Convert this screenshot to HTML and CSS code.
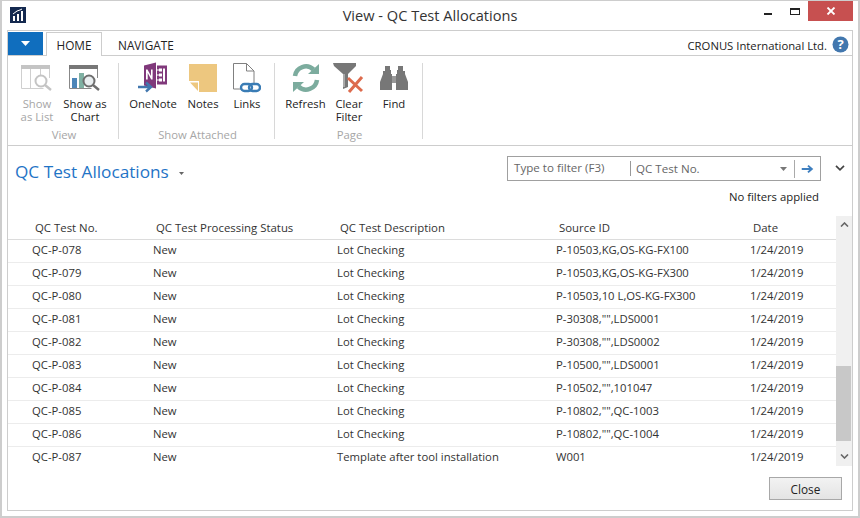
FILE: index.html
```html
<!DOCTYPE html>
<html lang="en">
<head>
<meta charset="utf-8">
<title>View - QC Test Allocations</title>
<link rel="stylesheet" href="styles.css">
</head>
<body>
<div class="window">
  <header class="titlebar">
    <div class="title-left">
      <svg class="app-icon" width="16" height="16" viewBox="0 0 16 16"><rect width="16" height="16" fill="#14294f"/><path d="M3 9h2v5H3zM7 7h2v7H7zM11 4h2v10h-2z" fill="#fff"/><path d="M3 7l4-3 3-1 2-1" stroke="#fff" fill="none"/></svg>
    </div>
    <div class="title-text">View - QC Test Allocations</div>
    <div class="win-buttons">
      <span class="win-min"></span>
      <span class="win-max"></span>
      <span class="win-close"><svg width="10" height="8" viewBox="0 0 10 8"><path d="M1.5 0.5l7 7M8.5 0.5l-7 7" stroke="#fff" stroke-width="1.8"/></svg></span>
    </div>
  </header>
  <div class="frame">
    <div class="tabs">
      <button class="menu-btn"><svg width="9" height="5" viewBox="0 0 9 5"><path d="M0 0h9L4.500 5z" fill="#fff"/></svg></button>
      <div class="tab active">HOME</div>
      <div class="tab">NAVIGATE</div>
      <div class="company">CRONUS International Ltd.</div>
      <svg class="help" width="17" height="17" viewBox="0 0 17 17"><circle cx="8.500" cy="8.500" r="8" fill="#4277ae"/><text x="8.500" y="13" text-anchor="middle" class="help-q">?</text></svg>
    </div>
    <div class="ribbon">
      <section class="group group-view">
        <div class="group-items">
          <div class="rbtn disabled w48">
            <svg width="32" height="26" viewBox="0 0 32 26"><path d="M0 0h29v4H0z" fill="#c4c4c4"/><path d="M.5 4v19.500h22M28.500 4v9M9.500 4v19M19.500 4v6" stroke="#cfcfcf" fill="none"/><circle cx="20" cy="16" r="5.500" fill="#fff" stroke="#c4c4c4" stroke-width="2"/><path d="M24 20l6 5" stroke="#c4c4c4" stroke-width="2.400"/></svg>
            <span>Show<br>as List</span>
          </div>
          <div class="rbtn w48">
            <svg width="32" height="26" viewBox="0 0 32 26"><path d="M0 0h29v4H0z" fill="#777"/><path d="M.5 4v19.500h22M28.500 4v9" stroke="#888" fill="none"/><path d="M3 13h5v10H3z" fill="#4d86b8"/><path d="M10 8h5v15h-5z" fill="#7fb0a2"/><circle cx="20" cy="16" r="5.500" fill="#e9eef0" stroke="#6e6e6e" stroke-width="2"/><path d="M24 20l6 5" stroke="#6e6e6e" stroke-width="2.400"/></svg>
            <span>Show as<br>Chart</span>
          </div>
        </div>
        <div class="group-label">View</div>
      </section>
      <section class="group group-attached">
        <div class="group-items">
          <div class="rbtn w50">
            <svg width="32" height="31" viewBox="0 0 32 31"><path d="M7 3l12-3v26l-12-3z" fill="#80397b"/><path d="M20 3h10v19H20z" fill="#80397b"/><path d="M22 6h3v3h-3zM22 11h3v3h-3zM22 16h3v3h-3zM26 6h2v13h-2z" fill="#fff"/><path d="M19 7.500h3M19 12.500h3M19 17.500h3" stroke="#fff"/><path d="M9 17V7h1.500l3.500 6.500V7h1.600v10h-1.400l-3.500-6.500V17z" fill="#fff"/><path d="M1 24.500h12M9 20l5 4.500-5 4.500" stroke="#4277ae" stroke-width="2.400" fill="none"/></svg>
            <span>OneNote</span>
          </div>
          <div class="rbtn w40">
            <svg width="28" height="28" viewBox="0 0 28 28"><path d="M0 0h28v28H10V17H0z" fill="#edc77f"/><path d="M1 18.500h8V27z" fill="#edc77f"/></svg>
            <span>Notes</span>
          </div>
          <div class="rbtn w48">
            <svg width="28" height="30" viewBox="0 0 28 30"><path d="M.5.500h13l7.500 7.500v13M8 26H.5V.5" fill="#fff" stroke="#808080"/><path d="M13.500.500V8H21" fill="none" stroke="#808080"/><rect x="8" y="21" width="11" height="7" rx="3.500" fill="none" stroke="#3a7cb5" stroke-width="2.400"/><rect x="16" y="21" width="11" height="7" rx="3.500" fill="none" stroke="#3a7cb5" stroke-width="2.400"/></svg>
            <span>Links</span>
          </div>
        </div>
        <div class="group-label">Show Attached</div>
      </section>
      <section class="group group-page">
        <div class="group-items">
          <div class="rbtn w43">
            <svg width="28" height="28" viewBox="0 0 28 28"><path d="M3 12A11 11 0 0 1 21.500 5.500" fill="none" stroke="#7cac9e" stroke-width="4.500"/><path d="M16 10h11V0z" fill="#7cac9e"/><path d="M25 16A11 11 0 0 1 6.500 22.500" fill="none" stroke="#7cac9e" stroke-width="4.500"/><path d="M12 18H1v10z" fill="#7cac9e"/></svg>
            <span>Refresh</span>
          </div>
          <div class="rbtn w44">
            <svg width="32" height="30" viewBox="0 0 32 30"><path d="M0 0h23v3l-8 8v13l-5 2V11L1 3z" fill="#777"/><path d="M11 11v13" stroke="#ddd"/><path d="M15 15l14 13M29 14L16 29" stroke="#dd6b4d" stroke-width="3"/></svg>
            <span>Clear<br>Filter</span>
          </div>
          <div class="rbtn w46">
            <svg width="28" height="26" viewBox="0 0 28 26"><path d="M5 1h5v4h1v5H3V6h2zM18 1h5v5h2v4h-8V5h1z" fill="#777"/><path d="M3 9h9v16H0v-8zM25 9h-9v16h12v-8z" fill="#777"/><path d="M12 11h4v7h-4z" fill="#999"/></svg>
            <span>Find</span>
          </div>
        </div>
        <div class="group-label">Page</div>
      </section>
    </div>
    <main class="content">
      <div class="page-head">
        <div class="page-title">QC Test Allocations <svg class="caret" width="5" height="3" viewBox="0 0 5 3"><path d="M0 0h5L2.500 3z" fill="#666"/></svg></div>
        <div class="filter-box">
          <span class="filter-type">Type to filter (F3)</span>
          <span class="filter-field">QC Test No.</span>
          <svg class="filter-drop" width="7" height="4" viewBox="0 0 7 4"><path d="M0 0h7L3.500 4z" fill="#777"/></svg>
          <svg class="filter-go" width="26" height="18" viewBox="0 0 26 18"><path d="M7 9h10M13.500 5.500L17.500 9l-4 3.500" fill="none" stroke="#3f7fbf" stroke-width="2"/></svg>
        </div>
        <svg class="collapse" width="10" height="6" viewBox="0 0 10 6"><path d="M1 .800l4 4 4-4" fill="none" stroke="#444" stroke-width="1.700"/></svg>
      </div>
      <div class="no-filter">No filters applied</div>
      <div class="list">
        <table class="grid">
          <thead>
            <tr><th class="c1">QC Test No.</th><th class="c2">QC Test Processing Status</th><th class="c3">QC Test Description</th><th class="c4">Source ID</th><th class="c5">Date</th></tr>
          </thead>
          <tbody>
            <tr><td class="c1">QC-P-078</td><td>New</td><td>Lot Checking</td><td>P-10503,KG,OS-KG-FX100</td><td>1/24/2019</td></tr>
            <tr><td class="c1">QC-P-079</td><td>New</td><td>Lot Checking</td><td>P-10503,KG,OS-KG-FX300</td><td>1/24/2019</td></tr>
            <tr><td class="c1">QC-P-080</td><td>New</td><td>Lot Checking</td><td>P-10503,10 L,OS-KG-FX300</td><td>1/24/2019</td></tr>
            <tr><td class="c1">QC-P-081</td><td>New</td><td>Lot Checking</td><td>P-30308,"",LDS0001</td><td>1/24/2019</td></tr>
            <tr><td class="c1">QC-P-082</td><td>New</td><td>Lot Checking</td><td>P-30308,"",LDS0002</td><td>1/24/2019</td></tr>
            <tr><td class="c1">QC-P-083</td><td>New</td><td>Lot Checking</td><td>P-10500,"",LDS0001</td><td>1/24/2019</td></tr>
            <tr><td class="c1">QC-P-084</td><td>New</td><td>Lot Checking</td><td>P-10502,"",101047</td><td>1/24/2019</td></tr>
            <tr><td class="c1">QC-P-085</td><td>New</td><td>Lot Checking</td><td>P-10802,"",QC-1003</td><td>1/24/2019</td></tr>
            <tr><td class="c1">QC-P-086</td><td>New</td><td>Lot Checking</td><td>P-10802,"",QC-1004</td><td>1/24/2019</td></tr>
            <tr class="last"><td class="c1">QC-P-087</td><td>New</td><td>Template after tool installation</td><td>W001</td><td>1/24/2019</td></tr>
          </tbody>
        </table>
        <div class="scrollbar">
          <svg width="9" height="5" viewBox="0 0 9 5"><path d="M1 4.500l3.500-3.500 3.500 3.500" fill="none" stroke="#666" stroke-width="1.600"/></svg>
          <div class="track"><div class="thumb"></div></div>
          <svg width="9" height="5" viewBox="0 0 9 5"><path d="M1 .5l3.500 3.500 3.500-3.500" fill="none" stroke="#666" stroke-width="1.600"/></svg>
        </div>
      </div>
      <div class="footer"><button class="close-btn">Close</button></div>
    </main>
  </div>
</div>
</body>
</html>
```

FILE: styles.css
```css
* { box-sizing: border-box; }
html, body { margin: 0; padding: 0; background: #fff; }
body { font-family: "Open Sans", "Noto Sans", sans-serif; font-size: 11.3px; color: #333; }
.window { width: 860px; height: 518px; border: 2px solid #cdcdcd; border-top-width: 1px; display: flex; flex-direction: column; overflow: hidden; background: #fff; }

.titlebar { height: 29px; flex: none; display: grid; grid-template-columns: 1fr auto 1fr; }
.title-left { padding: 6px 0 0 8px; }
.app-icon { display: block; }
.title-text { font-size: 14.6px; line-height: 29px; color: #333; }
.win-buttons { display: flex; justify-content: flex-end; align-items: flex-start; padding-right: 5px; }
.win-min { width: 8px; height: 2px; background: #222; margin: 12px 18px 0 0; }
.win-max { width: 10px; height: 7px; border: 1px solid #222; border-top-width: 2px; margin: 7px 8px 0 0; }
.win-close { width: 45px; height: 20px; background: #c75050; display: flex; align-items: center; justify-content: center; }

.frame { flex: 1; margin: 0 5px 5px; border: 1px solid #cdcdcd; display: flex; flex-direction: column; min-height: 0; }

.tabs { height: 25px; flex: none; padding-top: 1px; display: flex; align-items: stretch; border-bottom: 1px solid #cdcdcd; }
.menu-btn { width: 35px; height: 23px; margin: 0; padding: 0; border: 0; background: #106ebe; display: flex; align-items: center; justify-content: center; }
.tab { font-size: 11.8px; line-height: 26px; color: #222; padding: 0 16px; }
.tab.active { margin-left: 3px; padding: 0; text-align: center; width: 56px; height: 24px; background: #fff; border: 1px solid #cdcdcd; border-bottom: 0; line-height: 25px; }
.company { margin-left: auto; font-size: 11.3px; line-height: 27px; color: #222; padding-right: 5px; }
.help { margin: 4px 3px 0 0; }
.help-q { font: bold 13px "Open Sans", sans-serif; fill: #fff; }

.ribbon { height: 90px; flex: none; display: flex; align-items: flex-start; border-bottom: 1px solid #cdcdcd; padding-top: 7px; background: #fff; }
.group { display: flex; flex-direction: column; height: 76px; border-right: 1px solid #d8d8d8; }
.group-view { width: 111px; }
.group-attached { width: 156px; }
.group-page { width: 148px; }
.group-view .group-items { padding-left: 5px; }
.group-attached .group-items,
.group-page .group-items { padding-left: 9px; }
.group-items { display: flex; height: 65px; flex: none; }
.group-label { text-align: center; color: #a6a6a6; line-height: 14px; padding-left: 2px; }
.rbtn { display: flex; flex-direction: column; align-items: center; text-align: center; color: #222; line-height: 13px; }
.rbtn svg { height: 32px; flex: none; margin: -1px 0 3px; }
.rbtn.disabled { color: #a6a6a6; }
.w40 { width: 40px; margin-left: 5px; }
.w43 { width: 43px; }
.w44 { width: 44px; }
.w46 { width: 46px; }
.w48 { width: 48px; }
.w50 { width: 50px; }

.content { flex: 1; display: flex; flex-direction: column; min-height: 0; }
.page-head { display: flex; align-items: flex-start; height: 40px; padding-top: 10px; flex: none; }
.page-title { font-size: 17.2px; line-height: 26px; color: #1f74c6; padding-left: 7px; margin-top: 3px; width: 499px; white-space: nowrap; }
.caret { vertical-align: 3px; margin-left: 6px; }
.filter-box { width: 314px; height: 25px; border: 1px solid #a0a0a0; display: flex; align-items: center; color: #666; font-size: 11.6px; }
.filter-type { width: 123px; padding-left: 6px; height: 15px; line-height: 13px; border-right: 1px solid #999; white-space: nowrap; }
.filter-field { flex: 1; padding-left: 5px; }
.filter-drop { margin-right: 7px; }
.filter-go { border-left: 1px solid #aaa; }
.collapse { margin: 9px 0 0 14px; }
.no-filter { flex: none; height: 30px; line-height: 22px; text-align: right; padding-right: 33px; color: #222; }

.list { flex: none; height: 250px; display: flex; align-items: stretch; }
.grid { width: 828px; table-layout: fixed; border-collapse: collapse; align-self: flex-start; }
.grid th { font-weight: 400; font-size: 11.4px; text-align: left; height: 23px; padding: 1px 0 0 3px; border-bottom: 1px solid #dcdcdc; color: #333; white-space: nowrap; }
.grid td { height: 23px; padding: 0 0 2px; border-bottom: 1px solid #ececec; white-space: nowrap; }
.grid .last td { border-bottom: 0; }
.grid .c1 { width: 145px; padding-left: 24px; }
.grid th.c1 { padding-left: 27px; }
.c2 { width: 184px; }
.c3 { width: 219px; }
.c4 { width: 194px; }
.c5 { width: 86px; }
.scrollbar { width: 16px; background: #f0f0f0; display: flex; flex-direction: column; align-items: center; justify-content: space-between; padding: 6px 0 7px; }
.track { flex: 1; width: 15px; margin: 5px 1px 5px 0; position: relative; }
.thumb { position: absolute; left: 0; right: 0; top: 134px; height: 75px; background: #c8c8c8; }

.footer { flex: 1; display: flex; justify-content: flex-end; align-items: flex-start; padding: 11px 10px 0 0; }
.close-btn { width: 73px; height: 23px; border: 1px solid #a8a8a8; background: linear-gradient(#f2f2f2, #e4e4e4); font: 11.8px "Open Sans", sans-serif; color: #222; padding: 0; }
```
